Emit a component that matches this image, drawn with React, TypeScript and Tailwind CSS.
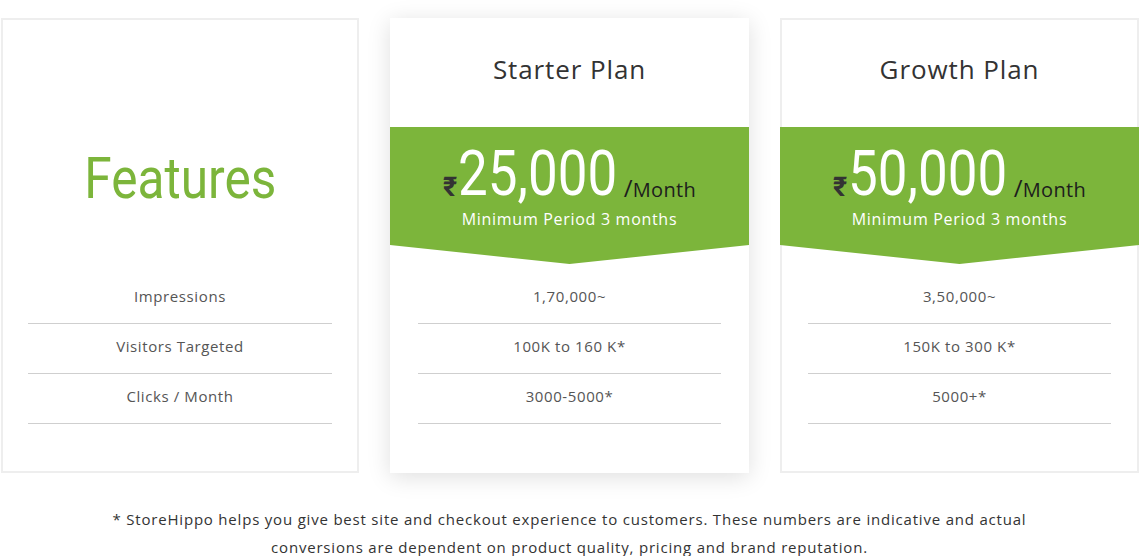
import React from 'react';

const body = { fontFamily: '"Open Sans", "Liberation Sans", sans-serif' };
const cond = { fontFamily: 'Roboto, "Liberation Sans", sans-serif' };

const features = ['Impressions', 'Visitors Targeted', 'Clicks / Month'];

const plans = [
  { name: 'Starter Plan', price: '25,000', rows: ['1,70,000~', '100K to 160 K*', '3000-5000*'], featured: true },
  { name: 'Growth Plan', price: '50,000', rows: ['3,50,000~', '150K to 300 K*', '5000+*'], featured: false },
];

const Rows = ({ items, pad }: { items: string[]; pad: string }) => (
  <div className={`${pad} pt-[10px] pb-[47px]`}>
    {items.map((t) => (
      <div
        key={t}
        className="h-[50px] border-b border-[#cfcfcf] flex items-center justify-center pb-[4px] text-[15px] tracking-[0.6px] text-[#555]"
      >
        {t}
      </div>
    ))}
  </div>
);

const PlanCard = ({ name, price, rows, featured }: (typeof plans)[number]) => (
  <div
    className={`w-[359px] shrink-0 bg-white ${
      featured ? 'shadow-[0_4px_22px_rgba(0,0,0,0.13)]' : 'border-2 border-[#eeeeee]'
    }`}
  >
    <div
      className={`h-[109px] flex items-center justify-center pb-[6px] text-[26px] text-[#333] tracking-[0.9px] ${
        featured ? '' : '-mt-[2px] -mx-[2px]'
      }`}
    >
      {name}
    </div>
    <div
      className={`h-[137px] bg-[#7cb53b] [clip-path:polygon(0_0,100%_0,100%_118px,50%_100%,0_118px)] flex flex-col items-center pt-[18px] ${
        featured ? '' : '-mx-[2px]'
      }`}
    >
      <div className="flex items-end h-[60px]">
        <span className="text-[#333] text-[27px] leading-none mb-[4px] mr-[1px] font-bold" style={cond}>
          ₹
        </span>
        <span className="text-white text-[63px] leading-none inline-block scale-x-[0.84] origin-left -mr-[30px]" style={cond}>
          {price}
        </span>
        <span className="text-[#1d1d1d] text-[20px] leading-none mb-[5px] ml-[6px] tracking-[0.3px]">
          <span className="text-[24px]">/</span>Month
        </span>
      </div>
      <div className="text-white text-[16px] tracking-[0.7px] mt-[2px]">Minimum Period 3 months</div>
    </div>
    <Rows items={rows} pad={featured ? 'px-[28px]' : 'px-[26px]'} />
  </div>
);

export default function App() {
  return (
    <div className="w-[1139px] h-[556px] bg-white overflow-hidden pt-[18px]" style={body}>
      <div className="flex gap-[31px] pl-[1px]">
        <div className="w-[358px] shrink-0 border-2 border-[#eeeeee] bg-white">
          <div className="h-[107px]" />
          <div className="h-[137px] flex items-start justify-center pt-[23px]">
            <span className="text-[#7cb53b] text-[57px] leading-none inline-block scale-x-[0.87]" style={cond}>
              Features
            </span>
          </div>
          <Rows items={features} pad="px-[25px]" />
        </div>
        {plans.map((p) => (
          <PlanCard key={p.name} {...p} />
        ))}
      </div>
      <p className="mt-[32px] text-center text-[15px] leading-[28px] tracking-[0.8px] text-[#333]">
        * StoreHippo helps you give best site and checkout experience to customers. These numbers are indicative and actual
        <br />
        conversions are dependent on product quality, pricing and brand reputation.
      </p>
    </div>
  );
}
